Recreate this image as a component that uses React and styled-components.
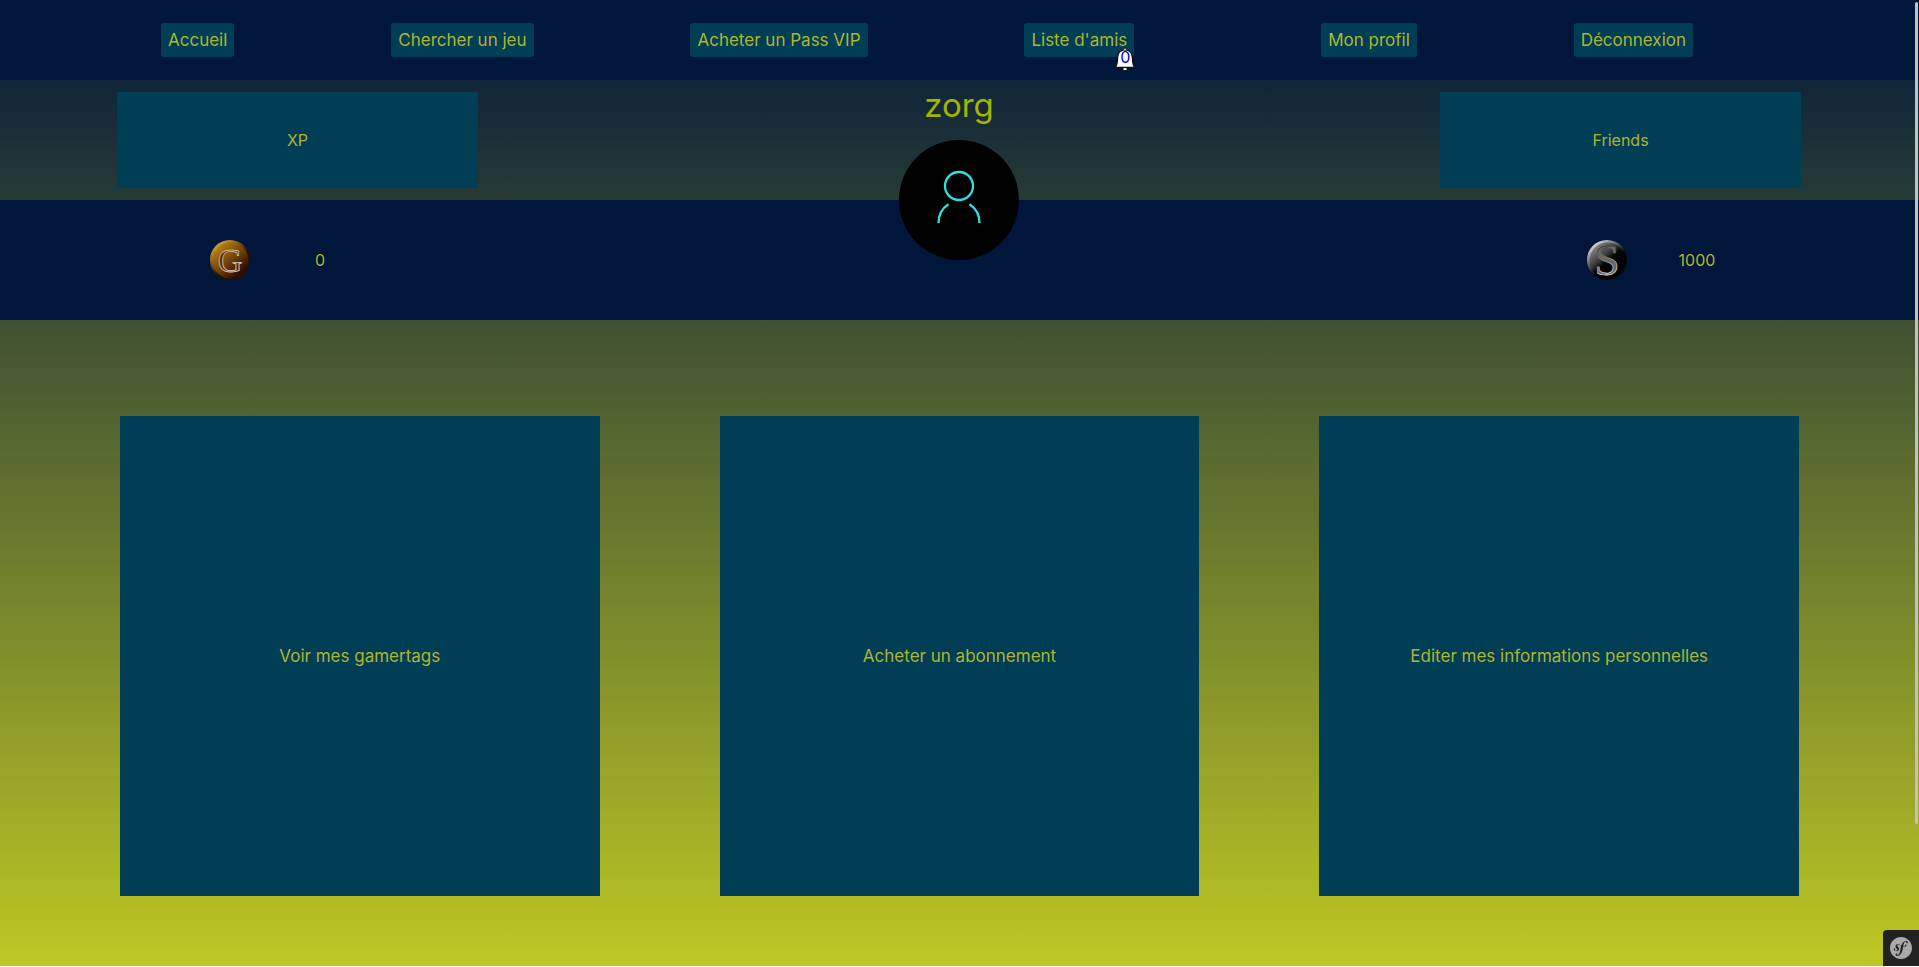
import React from "react";
import styled, { createGlobalStyle } from "styled-components";
import { SiSymfony } from "react-icons/si";

const color = {
  navy: "#00163b",
  teal: "#003e55",
  text: "#b1b42f",
  title: "#a3b500",
};

const GlobalStyle = createGlobalStyle`
  *, *::before, *::after { box-sizing: border-box; }
  body {
    margin: 0;
    font-family: Inter, "Open Sans", sans-serif;
    font-size: 16px;
    line-height: 24px;
    color: ${color.text};
  }
  a { color: inherit; text-decoration: none; }
`;

const Page = styled.div`
  min-height: 100vh;
  border-bottom: 1px solid #fff;
  background: linear-gradient(${color.navy}, #bec823);
`;

const Header = styled.header`
  background: ${color.navy};
`;

const NavList = styled.ul`
  display: flex;
  align-items: center;
  justify-content: space-between;
  height: 80px;
  margin: 0;
  padding: 0 226px 0 161px;
  list-style: none;
`;

const NavItem = styled.li`
  position: relative;
  display: flex;
  margin-right: ${(p) => (p.$hasBell ? "30px" : "0")};
`;

const NavLink = styled.a`
  padding: 5px 7px;
  border-radius: 3px;
  background: ${color.teal};
  font-size: 17px;
  white-space: nowrap;
`;

const BellLink = styled.a`
  position: absolute;
  top: 24px;
  right: -2px;
  display: grid;
  place-items: center;
  width: 22px;
  height: 24px;
  color: #0000ee;
  line-height: 20px;
`;

const BellShape = styled.svg`
  grid-area: 1 / 1;
  width: 22px;
  height: 24px;
`;

const BellCount = styled.span`
  grid-area: 1 / 1;
  padding-bottom: 4px;
  z-index: 1;
`;

const Summary = styled.section`
  display: flex;
  align-items: center;
  justify-content: space-between;
  height: 120px;
  padding: 0 118px 0 117px;
`;

const SummaryCard = styled.a`
  display: grid;
  place-items: center;
  width: 361px;
  height: 96px;
  background: ${color.teal};
`;

const Identity = styled.div`
  display: flex;
  flex-direction: column;
  align-items: center;
  align-self: flex-start;
  height: 120px;
`;

const UserName = styled.h1`
  margin: 0;
  padding-bottom: 10px;
  color: ${color.title};
  font-size: 33px;
  font-weight: 400;
  line-height: 50px;
`;

const Avatar = styled.svg`
  position: relative;
  flex: none;
  width: 120px;
  height: 120px;
`;

const Wallet = styled.section`
  display: flex;
  align-items: center;
  justify-content: space-between;
  height: 120px;
  padding: 0 172px 0 210px;
  background: ${color.navy};
`;

const Balance = styled.div`
  display: flex;
  align-items: center;
  gap: 20px;
`;

const Amount = styled.span`
  width: 100px;
  text-align: center;
`;

const CoinShape = styled.svg`
  width: 40px;
  height: 40px;
  overflow: visible;
`;

const Actions = styled.main`
  display: flex;
  justify-content: space-evenly;
  padding: 96px 0 70px;
`;

const ActionCard = styled.a`
  display: grid;
  place-items: center;
  width: 25%;
  aspect-ratio: 1;
  background: ${color.teal};
  font-size: 17px;
`;

const ScrollThumb = styled.div`
  position: fixed;
  top: 2px;
  right: 1px;
  width: 3px;
  height: 85vh;
  border-radius: 2px;
  background: #c1c1c1;
`;

const DebugButton = styled.button`
  position: fixed;
  right: 0;
  bottom: 1px;
  display: grid;
  place-items: center;
  width: 36px;
  height: 36px;
  padding: 0;
  border: 0;
  border-radius: 4px 0 0 0;
  background: #222;
  color: #aaa;
`;

const Bell = () => (
  <BellShape viewBox="0 0 22 24" aria-hidden="true">
    <circle cx="11" cy="2.6" r="1.6" fill="#fff" stroke="#111" />
    <path d="M9 20.5h4v1.6a2 1.6 0 0 1-4 0z" fill="#fff" stroke="#111" />
    <path
      d="M11 2.8c4.600 0 7.100 2.800 7.300 7.200.2 5 .5 8.200 2.400 10.500H1.300c1.900-2.300 2.200-5.500 2.400-10.500C3.900 5.600 6.400 2.800 11 2.800z"
      fill="#fff"
      stroke="#111"
      strokeWidth="1.300"
    />
    <path d="M9.600 21.400h2.800v1.600h-2.800zM10.300 2h1.400v1h-1.400z" fill="#fff" />
  </BellShape>
);

const Coin = ({ id, letter, face, edge, ink, glyph }) => (
  <CoinShape viewBox="0 0 40 40" role="img" aria-label={`Pièce ${letter}`}>
    <defs>
      <linearGradient id={`${id}-face`} x1="0.15" y1="0.1" x2="0.8" y2="0.85">
        {face.map(([offset, stop]) => (
          <stop key={offset} offset={offset} stopColor={stop} />
        ))}
      </linearGradient>
      <linearGradient id={`${id}-edge`} x1="0.2" y1="0.1" x2="0.8" y2="0.9">
        <stop offset="0" stopColor={edge[0]} />
        <stop offset="0.6" stopColor={edge[1]} />
      </linearGradient>
      <linearGradient id={`${id}-ink`} x1="0.3" y1="0" x2="0.5" y2="1">
        <stop offset="0.15" stopColor={ink[0]} />
        <stop offset="0.85" stopColor={ink[1]} />
      </linearGradient>
    </defs>
    <circle cx="20" cy="20" r="20" fill={`url(#${id}-edge)`} />
    <circle cx="20.500" cy="20.500" r="18" fill={`url(#${id}-face)`} />
    <text
      x="20"
      y={glyph.base}
      textAnchor="middle"
      fontFamily="Liberation Serif, serif"
      fontSize={glyph.size}
      fill={glyph.fill}
      stroke={`url(#${id}-ink)`}
      strokeWidth="0.8"
    >
      {letter}
    </text>
  </CoinShape>
);

const links = [
  { label: "Accueil" },
  { label: "Chercher un jeu" },
  { label: "Acheter un Pass VIP" },
  { label: "Liste d'amis", requests: 0 },
  { label: "Mon profil" },
  { label: "Déconnexion" },
];

const actions = [
  "Voir mes gamertags",
  "Acheter un abonnement",
  "Editer mes informations personnelles",
];

export default function App() {
  return (
    <Page>
      <GlobalStyle />
      <Header>
        <nav>
          <NavList>
            {links.map(({ label, requests }) => (
              <NavItem key={label} $hasBell={requests !== undefined}>
                <NavLink href="#">{label}</NavLink>
                {requests !== undefined && (
                  <BellLink href="#">
                    <Bell />
                    <BellCount>{requests}</BellCount>
                  </BellLink>
                )}
              </NavItem>
            ))}
          </NavList>
        </nav>
      </Header>

      <Summary>
        <SummaryCard href="#">XP</SummaryCard>
        <Identity>
          <UserName>zorg</UserName>
          <Avatar viewBox="0 0 120 120" role="img" aria-label="Avatar">
            <circle cx="60" cy="60" r="60" fill="#000" />
            <g fill="none" stroke="#30dfe2" strokeWidth="2.3">
              <circle cx="60" cy="46" r="14" />
              <path d="M49.500 64.300C43 68.500 39.500 75 39.500 83" />
              <path d="M70.500 64.300C77 68.500 80.500 75 80.500 83" />
            </g>
          </Avatar>
        </Identity>
        <SummaryCard href="#">Friends</SummaryCard>
      </Summary>

      <Wallet>
        <Balance>
          <Coin
            id="gold"
            letter="G"
            face={[[0, "#b98012"], [0.45, "#7d4a08"], [1, "#2b0b03"]]}
            edge={["#d3a02c", "#2a0d02"]}
            ink={["#c9a780", "#eadfce"]}
            glyph={{ base: 32, size: 34, fill: "#5b300a" }}
          />
          <Amount>0</Amount>
        </Balance>
        <Balance>
          <Coin
            id="silver"
            letter="S"
            face={[[0, "#858585"], [0.38, "#3a3a3a"], [0.55, "#060606"], [1, "#000"]]}
            edge={["#d2d2d2", "#050505"]}
            ink={["#202020", "#f0f0f0"]}
            glyph={{ base: 35, size: 45, fill: "#666" }}
          />
          <Amount>1000</Amount>
        </Balance>
      </Wallet>

      <Actions>
        {actions.map((label) => (
          <ActionCard key={label} href="#">
            {label}
          </ActionCard>
        ))}
      </Actions>

      <ScrollThumb />
      <DebugButton type="button" aria-label="Symfony">
        <SiSymfony size={22} />
      </DebugButton>
    </Page>
  );
}
